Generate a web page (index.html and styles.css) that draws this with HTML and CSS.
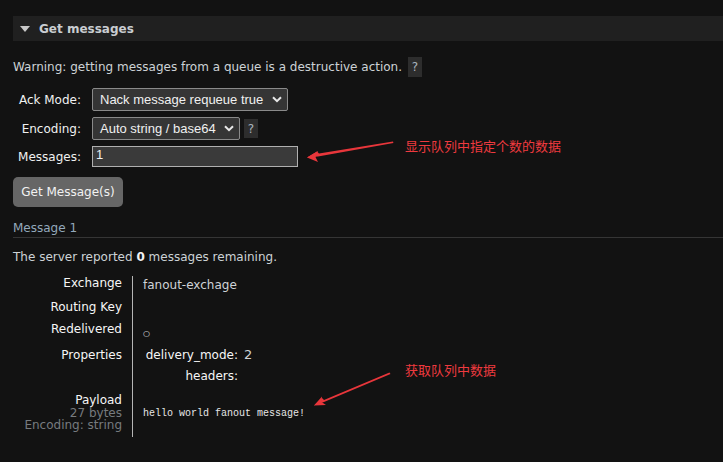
FILE: index.html
```html
<!DOCTYPE html>
<html lang="en">
<head>
<meta charset="utf-8">
<title>Get messages</title>
<link rel="stylesheet" href="styles.css">
</head>
<body>
<div class="section">
  <div class="section-head">
    <span class="tri"></span>
    <span class="section-title">Get messages</span>
  </div>

  <div class="warning">
    <span>Warning: getting messages from a queue is a destructive action.</span>
    <span class="help">?</span>
  </div>

  <div class="form">
    <div class="form-row">
      <label class="form-label">Ack Mode:</label>
      <div class="select sel-ack">
        <span>Nack message requeue true</span>
        <svg class="chev" width="10" height="7" viewBox="0 0 10 7"><path d="M1 1.2 L5 5.2 L9 1.2" fill="none" stroke="#e8e8e8" stroke-width="2"/></svg>
      </div>
    </div>
    <div class="form-row">
      <label class="form-label">Encoding:</label>
      <div class="select sel-enc">
        <span>Auto string / base64</span>
        <svg class="chev" width="10" height="7" viewBox="0 0 10 7"><path d="M1 1.2 L5 5.2 L9 1.2" fill="none" stroke="#e8e8e8" stroke-width="2"/></svg>
      </div>
      <span class="help help-sm">?</span>
    </div>
    <div class="form-row">
      <label class="form-label">Messages:</label>
      <div class="input">1</div>
    </div>
  </div>

  <button class="btn">Get Message(s)</button>

  <div class="msg-title">Message 1</div>
  <div class="remaining">The server reported <b>0</b> messages remaining.</div>

  <div class="details">
    <div class="dl r1">Exchange</div>
    <div class="dv r1"><span class="v-ex">fanout-exchage</span></div>
    <div class="dl r2">Routing Key</div>
    <div class="dv r2"></div>
    <div class="dl r3">Redelivered</div>
    <div class="dv r3"><span class="v-circ">○</span></div>
    <div class="dl r4">Properties</div>
    <div class="dv r4">
      <div class="props">
        <span class="pk">delivery_mode:</span><span class="pv">2</span>
        <span class="pk">headers:</span><span class="pv"></span>
      </div>
    </div>
    <div class="dl r5">Payload<div class="sub">27 bytes</div><div class="sub">Encoding: string</div></div>
    <div class="dv r5"><span class="payload">hello world fanout message!</span></div>
  </div>
</div>

<div class="note note1">显示队列中指定个数的数据</div>
<div class="note note2">获取队列中数据</div>
<svg class="arrows" width="723" height="462" viewBox="0 0 723 462">
  <polygon points="393,141.6 393.4,143 318,156.5 307,157.5 317,151.5 319,153.5" fill="#e8363b"/>
  <polygon points="307,157.5 318,151 315.5,157 318,162" fill="#e8363b"/>
  <polygon points="389.5,372.5 390.5,374 324,402 314,405.5 322,398 324,400" fill="#e8363b"/>
  <polygon points="314,405.5 322,396.5 321.5,402 326,405" fill="#e8363b"/>
</svg>
</body>
</html>
```

FILE: styles.css
```css
html, body {
  margin: 0;
  padding: 0;
  background: #121212;
}
body {
  font-family: "DejaVu Sans", Verdana, sans-serif;
  font-size: 12px;
  color: #d0d4d8;
  width: 723px;
  height: 462px;
  overflow: hidden;
  position: relative;
}
.section {
  padding: 16px 0 0 13px;
}
.section-head {
  height: 25px;
  background: #202020;
  display: flex;
  align-items: center;
  padding-left: 7px;
}
.tri {
  width: 0;
  height: 0;
  border-left: 5px solid transparent;
  border-right: 5px solid transparent;
  border-top: 6px solid #c8c8c8;
  margin-right: 9px;
  margin-top: 1px;
}
.section-title {
  font-weight: bold;
  color: #c9cdd1;
  font-size: 12px;
}
.warning {
  margin-top: 16px;
  height: 20px;
  display: flex;
  align-items: center;
  color: #cdd2d6;
}
.help {
  display: inline-flex;
  align-items: center;
  justify-content: center;
  width: 14px;
  height: 20px;
  background: #2d2d2d;
  color: #a9b4be;
  margin-left: 6px;
}
.help-sm {
  height: 19px;
  margin-left: 4px;
}
.form {
  margin-top: 11px;
  display: flex;
  flex-direction: column;
  gap: 6px;
}
.form-row {
  display: flex;
  align-items: center;
}
.form-label {
  width: 68px;
  text-align: right;
  margin-right: 11px;
  color: #f0f0f0;
}
.select {
  height: 23px;
  box-sizing: border-box;
  border: 1px solid #8a8a8a;
  border-radius: 2px;
  background: #353535;
  color: #f0f0f0;
  display: flex;
  align-items: center;
  justify-content: space-between;
  padding: 0 5px 0 7px;
  font-family: "Liberation Sans", Arial, sans-serif;
  font-size: 13px;
  white-space: nowrap;
}
.sel-ack { width: 196px; }
.sel-enc { width: 148px; }
.chev { display: block; }
.input {
  width: 206px;
  height: 21px;
  box-sizing: border-box;
  border: 1px solid #b0b0b0;
  background: #3a3a3a;
  color: #f0f0f0;
  padding: 0 3px;
  line-height: 16px;
  font-family: "Liberation Sans", Arial, sans-serif;
  font-size: 13px;
}
.btn {
  margin-top: 10px;
  width: 110px;
  height: 30px;
  border: none;
  border-radius: 5px;
  background: #666666;
  color: #f2f2f2;
  font-family: "DejaVu Sans", Verdana, sans-serif;
  font-size: 12px;
  padding: 0;
  display: block;
}
.msg-title {
  margin-top: 14px;
  line-height: 14px;
  padding-bottom: 2px;
  border-bottom: 1px solid #353535;
  color: #94a9bc;
}
.remaining {
  margin-top: 12px;
  line-height: 14px;
  color: #cdd2d6;
}
.remaining b { color: #f2f2f2; }
.details {
  margin-top: 12px;
  display: grid;
  grid-template-columns: 119px 1fr;
  grid-template-rows: 24px 22px 26px 45px 44px;
  line-height: 14px;
}
.dl {
  text-align: right;
  padding-right: 10px;
  color: #f6f6f6;
}
.dv {
  border-left: 1px solid #b5b5b5;
  padding-left: 10px;
  color: #cfd3d7;
}
.v-ex { display: block; padding-top: 2px; }
.v-circ {
  display: block;
  padding-top: 5px;
  font-family: "DejaVu Sans", sans-serif;
  font-size: 8px;
  color: #e0e4e8;
}
.props {
  display: grid;
  grid-template-columns: 95px auto;
  column-gap: 6px;
  row-gap: 7px;
  width: 130px;
}
.pk {
  text-align: right;
  color: #f6f6f6;
}
.pv {
  color: #cfd3d7;
  font-size: 13px;
}
.sub {
  color: #777b7f;
  line-height: 12px;
}
.payload {
  display: block;
  padding-top: 14px;
  font-family: "Liberation Mono", "DejaVu Sans Mono", monospace;
  font-size: 10px;
  color: #e6e6e6;
}
.note {
  position: absolute;
  font-family: "Noto Sans CJK SC", sans-serif;
  font-size: 13px;
  color: #ee3a3f;
  line-height: 18px;
}
.note1 { left: 405px; top: 137px; }
.note2 { left: 405px; top: 361px; }
.arrows {
  position: absolute;
  left: 0;
  top: 0;
  pointer-events: none;
}
```
